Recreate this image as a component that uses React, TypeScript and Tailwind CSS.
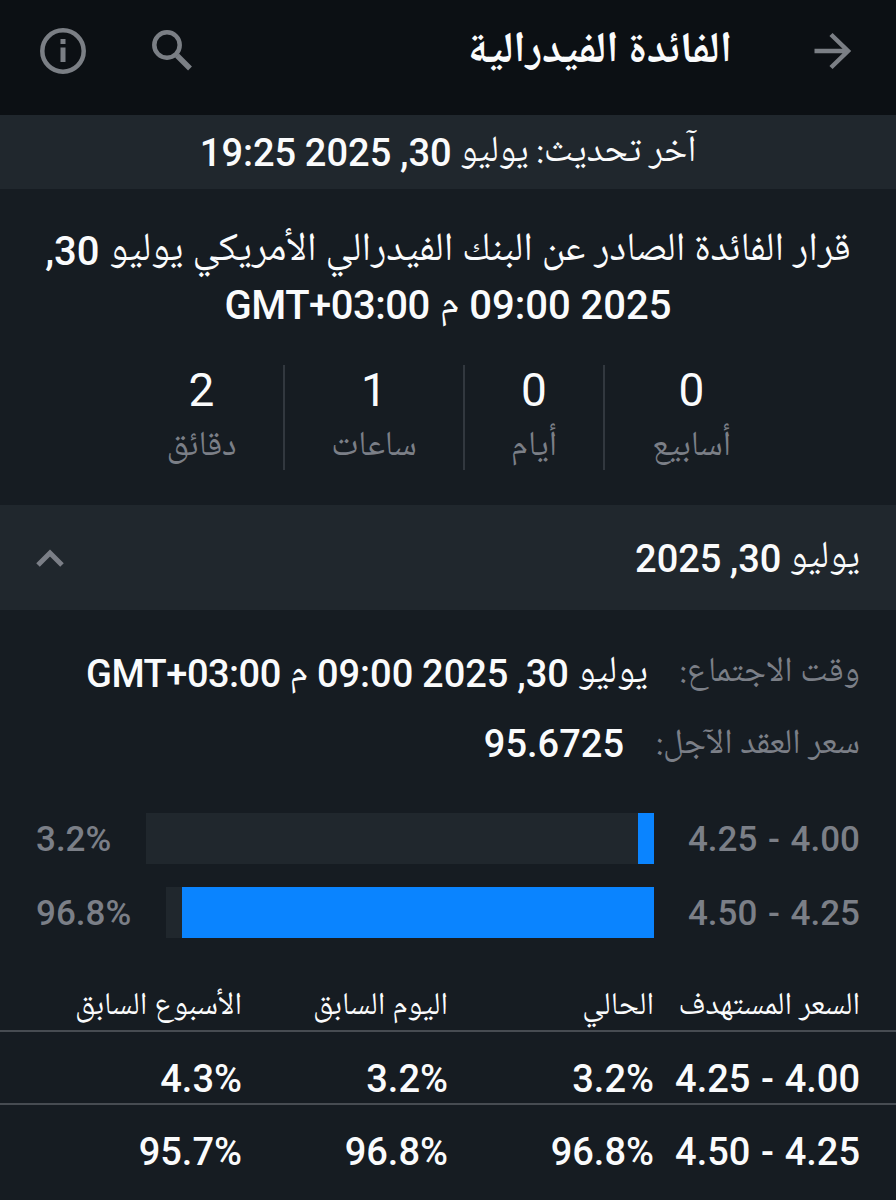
import type { ReactNode } from 'react';

const naskh = "font-['Noto_Naskh_Arabic','DejaVu_Sans',sans-serif]";

const stats = [
  { value: '0', label: 'أسابيع', box: 'w-[175px] border-l-2' },
  { value: '0', label: 'أيام', box: 'w-[140px] border-l-2' },
  { value: '1', label: 'ساعات', box: 'w-[180px] border-l-2' },
  { value: '2', label: 'دقائق', box: 'w-[163px]' },
];

const bars = [
  { range: '4.00 - 4.25', pct: 3.2, label: '3.2%' },
  { range: '4.25 - 4.50', pct: 96.8, label: '96.8%' },
];

const rows = [
  ['4.00 - 4.25', '3.2%', '3.2%', '4.3%'],
  ['4.25 - 4.50', '96.8%', '96.8%', '95.7%'],
];

function Ar({ children }: { children: ReactNode }) {
  return <span className={`align-[5px] font-normal leading-none tracking-normal ${naskh}`}>{children}</span>;
}

export default function App() {
  return (
    <div dir="rtl" lang="ar" className="flex h-[1200px] w-[896px] flex-col overflow-hidden bg-[#161c22] font-['Roboto','Noto_Naskh_Arabic','DejaVu_Sans',sans-serif] text-[38px] font-medium leading-[44px] text-[#fafbfc]">
      <header className="flex h-[115px] shrink-0 items-start bg-[#0c1014] pr-[44px] pl-[40px]">
        <svg className="mt-8 h-[38px] w-[38px]" viewBox="0 0 38 38" fill="none" stroke="#7b7f85" strokeWidth="4.5">
          <path d="M0.5 19H34M17 2.500L34 19L17 35.500" />
        </svg>
        <h1 className={`mt-[23px] mr-[82px] text-[43.5px] leading-[60px] font-bold ${naskh}`}>الفائدة الفيدرالية</h1>
        <div className="flex-1" />
        <svg className="mt-[30px] h-[41px] w-[41px]" viewBox="0 0 41 41" fill="none" stroke="#7b7f85">
          <circle cx="15" cy="15" r="12.700" strokeWidth="4.500" />
          <path d="M25 25.500L38 38.500" strokeWidth="5.500" />
        </svg>
        <svg className="mr-[66px] mt-7 h-[46px] w-[46px]" viewBox="0 0 46 46" fill="none" stroke="#7b7f85" strokeWidth="4.5">
          <circle cx="23" cy="23" r="20.700" />
          <path d="M23 19.500V34M23 11V16" strokeWidth="5" />
        </svg>
      </header>

      <div className="h-[74px] shrink-0 bg-[#20272d] pt-4 text-center tracking-[-0.25px] [word-spacing:-0.8px]">
        <span className="text-[37px]"><Ar>آخر تحديث: يوليو</Ar></span> 30, 2025 19:25
      </div>

      <section className="flex h-[316px] shrink-0 flex-col items-center pt-[41px] text-[40px]">
        <p className="h-[54px] whitespace-nowrap">
          <Ar>قرار الفائدة الصادر عن البنك الفيدرالي الأمريكي يوليو</Ar> 30,
        </p>
        <p className="h-[81px] whitespace-nowrap">
          <span className="tracking-[-0.3px]">2025 09:00</span> <Ar>م</Ar> <span className="tracking-[-0.5px]">GMT+03:00</span>
        </p>
        <div className="mr-[-2px] flex w-[658px]">
          {stats.map((s, i) => (
            <div key={i} className={`flex h-[105px] flex-col items-center border-[#32383f] pt-[3px] ${s.box}`}>
              <span className="text-[46px] font-normal">{s.value}</span>
              <span className={`mt-[14px] text-[35px] font-normal text-[#7b7f87] ${naskh}`}>{s.label}</span>
            </div>
          ))}
        </div>
      </section>

      <div className="flex h-[105px] shrink-0 items-start justify-between bg-[#20272d] px-[36px]">
        <div className="pt-8 tracking-[-0.2px] [word-spacing:-1.2px]">
          <Ar>يوليو</Ar> 30, 2025
        </div>
        <svg className="mt-[43px] h-[20px] w-[28px]" viewBox="0 0 28 20" fill="none" stroke="#7b7f87" strokeWidth="5">
          <path d="M2 17L14 5L26 17" />
        </svg>
      </div>

      <section className="flex shrink-0 flex-col px-[36px] pt-[42px]">
        <div className="flex h-[70px] whitespace-nowrap">
          <span className={`w-[212px] shrink-0 text-[35px] font-normal text-[#7b7f87] ${naskh}`}>وقت الاجتماع:</span>
          <span className="tracking-[-0.2px] [word-spacing:-0.7px]">
            <Ar>يوليو</Ar> 30, 2025 09:00 <Ar>م</Ar> <span className="tracking-[-0.5px]">GMT+03:00</span>
          </span>
        </div>
        <div className="flex h-[91px] whitespace-nowrap">
          <span className={`mt-[2px] w-[236px] shrink-0 text-[35px] font-normal text-[#7b7f87] ${naskh}`}>سعر العقد الآجل:</span>
          <span>95.6725</span>
        </div>
        <div className="flex flex-col gap-[23px]">
          {bars.map((b) => (
            <div key={b.range} className="flex h-[51px] items-center text-[35px] text-[#7b7f87]">
              <span className="w-[206px] shrink-0 pt-[3px] [word-spacing:2px]">{b.range}</span>
              <span className="h-full flex-1 bg-[#20272d]">
                <span className="block h-full bg-[#0a84ff]" style={{ width: `${b.pct}%` }} />
              </span>
              <span className="mr-[35px] pt-[3px]">{b.label}</span>
            </div>
          ))}
        </div>
      </section>

      <div className={`mt-[51px] grid h-[43px] shrink-0 grid-cols-[206px_206px_206px_206px] border-b-2 border-[#474c52] px-[36px] text-[31.6px] leading-[36px] font-normal whitespace-nowrap ${naskh}`}>
        <span>السعر المستهدف</span>
        <span>الحالي</span>
        <span>اليوم السابق</span>
        <span>الأسبوع السابق</span>
      </div>
      {rows.map((r) => (
        <div key={r[0]} className="grid h-[73px] shrink-0 grid-cols-[206px_206px_206px_206px] items-end border-b-2 border-[#474c52] px-[36px] pb-[2px] whitespace-nowrap [word-spacing:1.2px] last:border-transparent">
          {r.map((c, i) => (
            <span key={i}>{c}</span>
          ))}
        </div>
      ))}
    </div>
  );
}
